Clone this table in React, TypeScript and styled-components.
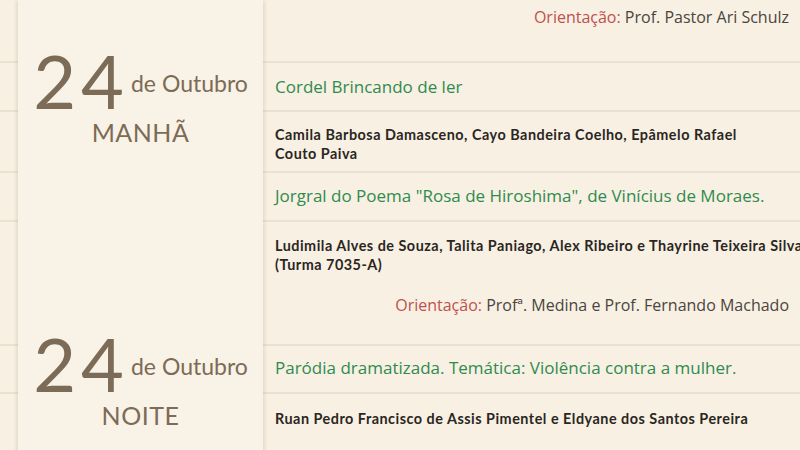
import React from "react";
import styled, { createGlobalStyle } from "styled-components";

const Global = createGlobalStyle`
  html, body { margin: 0; padding: 0; background: #f8f0e3; overflow: hidden; }
  body { width: 800px; height: 450px; }
`;

const Page = styled.div`
  display: grid;
  grid-template-columns: 18px 245px 1fr;
  align-content: start;
  width: 800px;
  height: 450px;
  overflow: hidden;
  background: #f8f0e3;
`;

const Row = styled.div<{ $r: number; $h: number; $pt?: number }>`
  grid-column: 1 / -1;
  grid-row: ${(p) => p.$r};
  height: ${(p) => p.$h}px;
  box-sizing: border-box;
  border-bottom: 2px solid #ebe1d1;
  padding: ${(p) => p.$pt ?? 0}px 11px 0 275px;
  display: flex;
  flex-direction: column;
`;

const Title = styled.div`
  font-family: "Open Sans", "Noto Sans", sans-serif;
  font-size: 17px;
  line-height: 22px;
  color: #2f8b4f;
  white-space: nowrap;
`;

const Names = styled.div`
  font-family: "Lato", "Liberation Sans", sans-serif;
  font-size: 14.4px;
  font-weight: 700;
  letter-spacing: 0.5px;
  line-height: 19px;
  color: #2a2622;
  white-space: nowrap;
`;

const Orient = styled.div<{ $mt?: number }>`
  font-family: "Open Sans", "Noto Sans", sans-serif;
  font-size: 16px;
  line-height: 22px;
  color: #4a4540;
  text-align: right;
  white-space: nowrap;
  margin-top: ${(p) => p.$mt ?? 0}px;
`;

const Label = styled.span`
  color: #c0504f;
`;

const DateColumn = styled.div`
  grid-column: 2;
  grid-row: 1 / 8;
  z-index: 1;
  background: #f9f2e6;
  box-shadow: -3px 0 3px -1px rgba(150, 125, 90, 0.18), 3px 0 3px -1px rgba(150, 125, 90, 0.18);
  display: flex;
  flex-direction: column;
  align-items: center;
`;

const DateBlock = styled.div<{ $mt: number }>`
  margin-top: ${(p) => p.$mt}px;
  display: flex;
  flex-direction: column;
  align-items: center;
  color: #7c6b56;
  font-family: "Lato", "Liberation Sans", sans-serif;
`;

const DateLine = styled.div`
  display: flex;
  align-items: baseline;
  gap: 2px;
`;

const Day = styled.span`
  font-size: 74px;
  line-height: 68px;
  letter-spacing: 5px;
`;

const Month = styled.span`
  font-size: 23px;
  line-height: 24px;
  transform: translateY(-17px);
`;

const Period = styled.div`
  font-size: 25px;
  line-height: 28px;
  margin-top: 3px;
  letter-spacing: 0.5px;
`;

export default function App() {
  return (
    <>
      <Global />
      <Page>
        <Row $r={1} $h={63} $pt={6}>
          <Orient>
            <Label>Orientação:</Label> Prof. Pastor Ari Schulz
          </Orient>
        </Row>
        <Row $r={2} $h={49} $pt={13}>
          <Title>Cordel Brincando de ler</Title>
        </Row>
        <Row $r={3} $h={61} $pt={13}>
          <Names>
            Camila Barbosa Damasceno, Cayo Bandeira Coelho, Epâmelo Rafael
            <br />
            Couto Paiva
          </Names>
        </Row>
        <Row $r={4} $h={49} $pt={12}>
          <Title>Jorgral do Poema "Rosa de Hiroshima", de Vinícius de Moraes.</Title>
        </Row>
        <Row $r={5} $h={124} $pt={14}>
          <Names>
            Ludimila Alves de Souza, Talita Paniago, Alex Ribeiro e Thayrine Teixeira Silva
            <br />
            (Turma 7035-A)
          </Names>
          <Orient $mt={20}>
            <Label>Orientação:</Label> Profª. Medina e Prof. Fernando Machado
          </Orient>
        </Row>
        <Row $r={6} $h={48} $pt={11}>
          <Title>Paródia dramatizada. Temática: Violência contra a mulher.</Title>
        </Row>
        <Row $r={7} $h={60} $pt={15}>
          <Names>Ruan Pedro Francisco de Assis Pimentel e Eldyane dos Santos Pereira</Names>
        </Row>
        <DateColumn>
          <DateBlock $mt={47}>
            <DateLine>
              <Day>24</Day>
              <Month>de Outubro</Month>
            </DateLine>
            <Period>MANHÃ</Period>
          </DateBlock>
          <DateBlock $mt={184}>
            <DateLine>
              <Day>24</Day>
              <Month>de Outubro</Month>
            </DateLine>
            <Period>NOITE</Period>
          </DateBlock>
        </DateColumn>
      </Page>
    </>
  );
}
